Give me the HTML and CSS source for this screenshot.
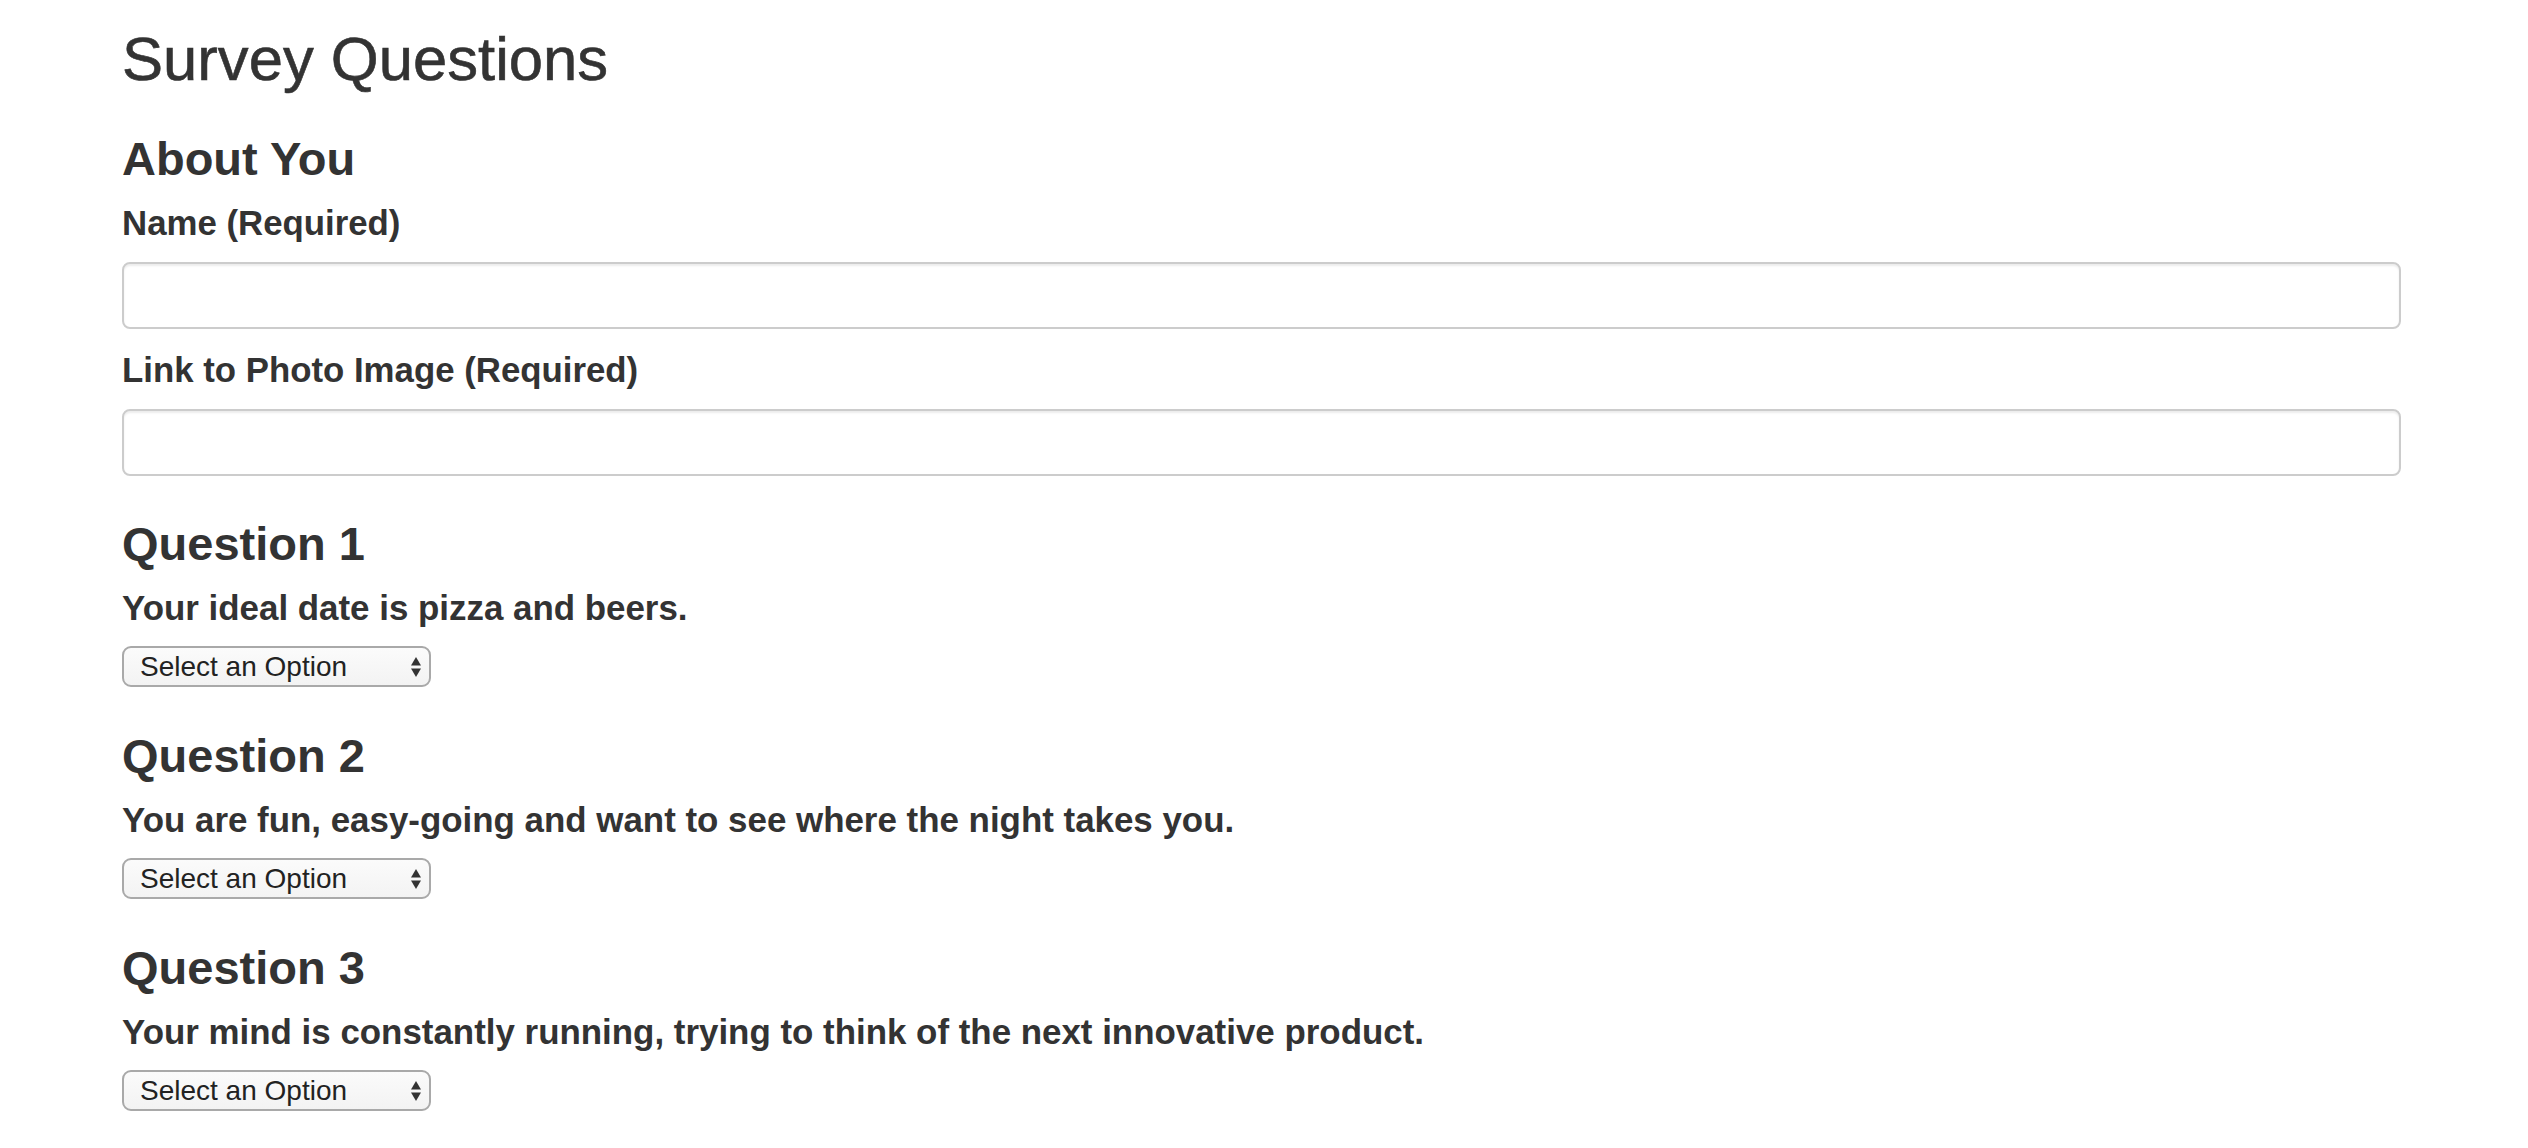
FILE: index.html
```html
<!DOCTYPE html>
<html lang="en">
<head>
<meta charset="utf-8">
<title>Survey Questions</title>
<link rel="stylesheet" href="styles.css">
</head>
<body>
<main class="page">
  <h1 class="title">Survey Questions</h1>

  <section class="about">
    <h3 class="section-title">About You</h3>
    <div class="field">
      <label class="label" for="name">Name (Required)</label>
      <input class="input" id="name" type="text">
    </div>
    <div class="field">
      <label class="label" for="photo">Link to Photo Image (Required)</label>
      <input class="input" id="photo" type="text">
    </div>
  </section>

  <section class="question">
    <h3 class="section-title">Question 1</h3>
    <p class="qtext">Your ideal date is pizza and beers.</p>
    <div class="select-wrap">
      <select class="select"><option>Select an Option</option></select>
      <svg class="arrows" viewBox="0 0 10 20" width="10" height="20" aria-hidden="true"><polygon points="0,8.5 5,0 10,8.5"/><polygon points="0,11.5 10,11.5 5,20"/></svg>
    </div>
  </section>

  <section class="question">
    <h3 class="section-title">Question 2</h3>
    <p class="qtext">You are fun, easy-going and want to see where the night takes you.</p>
    <div class="select-wrap">
      <select class="select"><option>Select an Option</option></select>
      <svg class="arrows" viewBox="0 0 10 20" width="10" height="20" aria-hidden="true"><polygon points="0,8.5 5,0 10,8.5"/><polygon points="0,11.5 10,11.5 5,20"/></svg>
    </div>
  </section>

  <section class="question">
    <h3 class="section-title">Question 3</h3>
    <p class="qtext">Your mind is constantly running, trying to think of the next innovative product.</p>
    <div class="select-wrap">
      <select class="select"><option>Select an Option</option></select>
      <svg class="arrows" viewBox="0 0 10 20" width="10" height="20" aria-hidden="true"><polygon points="0,8.5 5,0 10,8.5"/><polygon points="0,11.5 10,11.5 5,20"/></svg>
    </div>
  </section>
</main>
</body>
</html>
```

FILE: styles.css
```css
html, body {
  margin: 0;
  padding: 0;
  background: #ffffff;
}

body {
  font-family: "Liberation Sans", Arial, Helvetica, sans-serif;
  color: #333333;
}

.page {
  padding: 26px 127px 40px 122px;
  display: flex;
  flex-direction: column;
}

.title {
  margin: 0;
  font-size: 61.6px;
  line-height: 66px;
  font-weight: 400;
  -webkit-text-stroke: 0.6px #333333;
}

.section-title {
  margin: 0;
  font-size: 47px;
  line-height: 50px;
  font-weight: 700;
}

.about {
  margin-top: 42px;
  display: flex;
  flex-direction: column;
}

.field {
  display: flex;
  flex-direction: column;
}

.about .section-title + .field {
  margin-top: 19px;
}

.field + .field {
  margin-top: 21px;
}

.label {
  display: block;
  font-size: 34.8px;
  line-height: 40px;
  font-weight: 700;
}

.input {
  margin-top: 19px;
  box-sizing: border-box;
  width: 100%;
  height: 67px;
  border: 2px solid #cccccc;
  border-radius: 8px;
  box-shadow: inset 0 2px 2px rgba(0, 0, 0, 0.075);
  background: #ffffff;
  font-family: inherit;
  font-size: 28px;
  padding: 0 24px;
  outline: none;
}

.question {
  display: flex;
  flex-direction: column;
  align-items: flex-start;
  margin-top: 44px;
}

.about + .question {
  margin-top: 43px;
}

.qtext {
  margin: 19px 0 0 0;
  font-size: 34.9px;
  line-height: 40px;
  font-weight: 700;
}

.select-wrap {
  position: relative;
  margin-top: 18px;
  width: 309px;
  height: 41px;
}

.select {
  -webkit-appearance: none;
  appearance: none;
  box-sizing: border-box;
  width: 100%;
  height: 100%;
  margin: 0;
  padding: 0 30px 0 16px;
  border: 2px solid #a9a9a9;
  border-radius: 9px;
  background: linear-gradient(#fbfbfb, #f3f3f3);
  font-family: "Liberation Sans", Arial, sans-serif;
  font-size: 28px;
  color: #222222;
  line-height: 37px;
  outline: none;
}

.arrows {
  position: absolute;
  right: 10px;
  top: 10.5px;
  fill: #333333;
  pointer-events: none;
}
```
